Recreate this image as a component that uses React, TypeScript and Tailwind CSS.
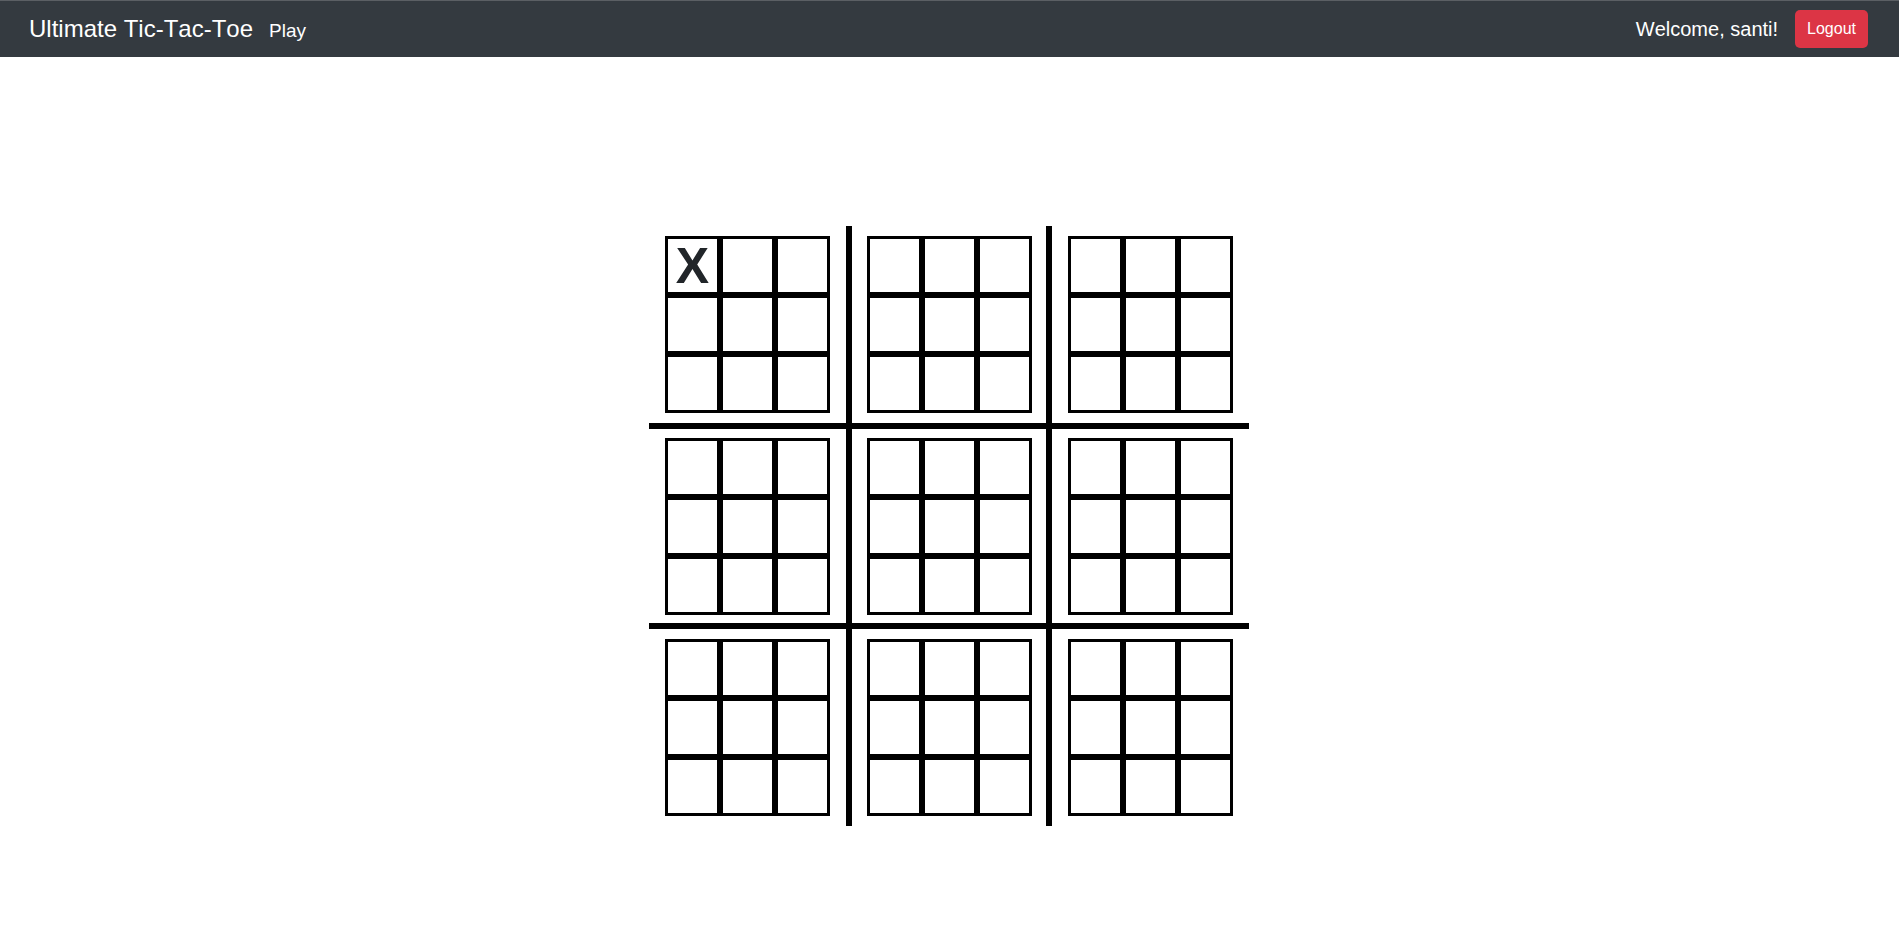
const bigCellBorders = [
  'border-r-[3px] border-b-[3px]',
  'border-x-[3px] border-b-[3px]',
  'border-l-[3px] border-b-[3px]',
  'border-r-[3px] border-y-[3px]',
  'border-x-[3px] border-y-[3px]',
  'border-l-[3px] border-y-[3px]',
  'border-r-[3px] border-t-[3px]',
  'border-x-[3px] border-t-[3px]',
  'border-l-[3px] border-t-[3px]',
]

// moves[board][cell]
const moves: string[][] = Array.from({ length: 9 }, () => Array(9).fill(''))
moves[0][0] = 'X'

const SmallBoard = ({ cells }: { cells: string[] }) => {
  return (
    <div className="grid w-[165px] grid-cols-3">
      {cells.map((value, index) => (
        <div
          key={`cell-${index}`}
          className="flex h-[59px] w-[55px] items-center justify-center border-[3px] border-black text-[50px] leading-none font-bold text-[#212529]"
        >
          {value}
        </div>
      ))}
    </div>
  )
}

const App = () => {
  return (
    <div className="min-h-screen bg-white font-['Liberation_Sans',Arial,sans-serif] [font-kerning:none]">
      {/* ----------------------- Navbar ----------------------- */}
      <nav className="flex h-[57px] items-center justify-between border-t border-[#5b5f64] bg-[#343a40] pr-[31px] pl-[29px]">
        <div className="flex items-baseline">
          <span className="text-[24px] text-white">Ultimate Tic-Tac-Toe</span>
          <span className="ml-4 text-[19px] text-white">Play</span>
        </div>
        <div className="flex items-center gap-[17px]">
          <span className="text-[20px] text-white">Welcome, santi!</span>
          <button
            type="button"
            className="h-[38px] rounded-[5px] bg-[#dc3545] px-3 text-[16px] text-white"
          >
            Logout
          </button>
        </div>
      </nav>

      {/* ----------------------- Board ----------------------- */}
      <main className="flex justify-center pt-[169px] pr-px">
        <div className="grid h-[600px] w-[600px] grid-cols-3">
          {moves.map((cells, index) => (
            <div
              key={`board-${index}`}
              className={`flex h-[200px] w-[200px] items-center justify-center border-black ${bigCellBorders[index]}`}
            >
              <SmallBoard cells={cells} />
            </div>
          ))}
        </div>
      </main>
    </div>
  )
}

export default App
